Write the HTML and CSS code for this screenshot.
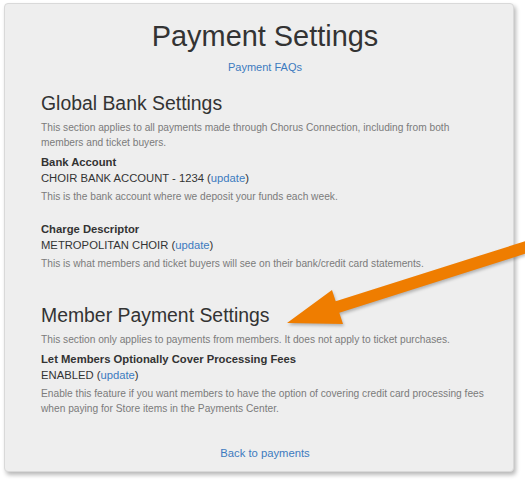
FILE: index.html
```html
<!DOCTYPE html>
<html>
<head>
<meta charset="utf-8">
<link rel="stylesheet" href="styles.css">
</head>
<body>
<div class="card">
  <h1 class="title">Payment Settings</h1>
  <div class="faq"><a href="#">Payment FAQs</a></div>

  <h2 class="heading first">Global Bank Settings</h2>
  <p class="help help-intro">This section applies to all payments made through Chorus Connection, including from both members and ticket buyers.</p>

  <div class="label">Bank Account</div>
  <div class="value">CHOIR BANK ACCOUNT - 1234 (<a href="#">update</a>)</div>
  <p class="help">This is the bank account where we deposit your funds each week.</p>

  <div class="label spaced">Charge Descriptor</div>
  <div class="value">METROPOLITAN CHOIR (<a href="#">update</a>)</div>
  <p class="help">This is what members and ticket buyers will see on their bank/credit card statements.</p>

  <h2 class="heading second">Member Payment Settings</h2>
  <p class="help help-intro">This section only applies to payments from members. It does not apply to ticket purchases.</p>

  <div class="label">Let Members Optionally Cover Processing Fees</div>
  <div class="value">ENABLED (<a href="#">update</a>)</div>
  <p class="help">Enable this feature if you want members to have the option of covering credit card processing fees when paying for Store items in the Payments Center.</p>

  <div class="back"><a href="#">Back to payments</a></div>
</div>

<svg class="arrow" width="525" height="482" viewBox="0 0 525 482">
  <path d="M528.2 240.2 L335.7 301.3 L332 290 L287 323 L343 324 L339.3 312.7 L531.8 251.6 Z" fill="#ef7d00"/>
</svg>
</body>
</html>
```

FILE: styles.css
```css
html, body {
  margin: 0;
  padding: 0;
  background: #ffffff;
}

body {
  font-family: "Liberation Sans", Arial, sans-serif;
  color: #333333;
  width: 525px;
  height: 482px;
  overflow: hidden;
}

a {
  color: #3d7bbf;
  text-decoration: none;
}

.card {
  margin: 3px 0 0 4px;
  width: 510px;
  height: 469px;
  box-sizing: border-box;
  background: #eeeeee;
  border: 1px solid #d9d9d9;
  border-radius: 4px;
  box-shadow: 2px 3px 4px rgba(0, 0, 0, 0.28);
  padding: 15px 24px 0 36px;
}

.title {
  margin: 0;
  font-size: 28.9px;
  line-height: 34px;
  font-weight: normal;
  text-align: center;
  color: #333333;
}

.faq {
  margin-top: 6px;
  font-size: 11px;
  line-height: 16px;
  text-align: center;
}

.heading {
  margin: 0;
  font-size: 19.4px;
  line-height: 24px;
  font-weight: normal;
  color: #333333;
}

.heading.first {
  margin-top: 16px;
}

.heading.second {
  margin-top: 32px;
}

.help {
  margin: 3px 0 0 0;
  font-size: 10.2px;
  line-height: 15px;
  color: #7b7b7b;
}

.help.help-intro {
  margin-top: 5px;
}

.label {
  margin-top: 4px;
  font-size: 11.26px;
  line-height: 16px;
  font-weight: bold;
  color: #333333;
}

.label.spaced {
  margin-top: 17px;
}

.value {
  font-size: 11.26px;
  line-height: 16px;
  color: #333333;
}

.back {
  margin-top: 29px;
  font-size: 11.26px;
  line-height: 16px;
  text-align: center;
}

.arrow {
  position: absolute;
  left: 0;
  top: 0;
  filter: drop-shadow(1px 2px 1.5px rgba(0, 0, 0, 0.25));
  pointer-events: none;
}
```
